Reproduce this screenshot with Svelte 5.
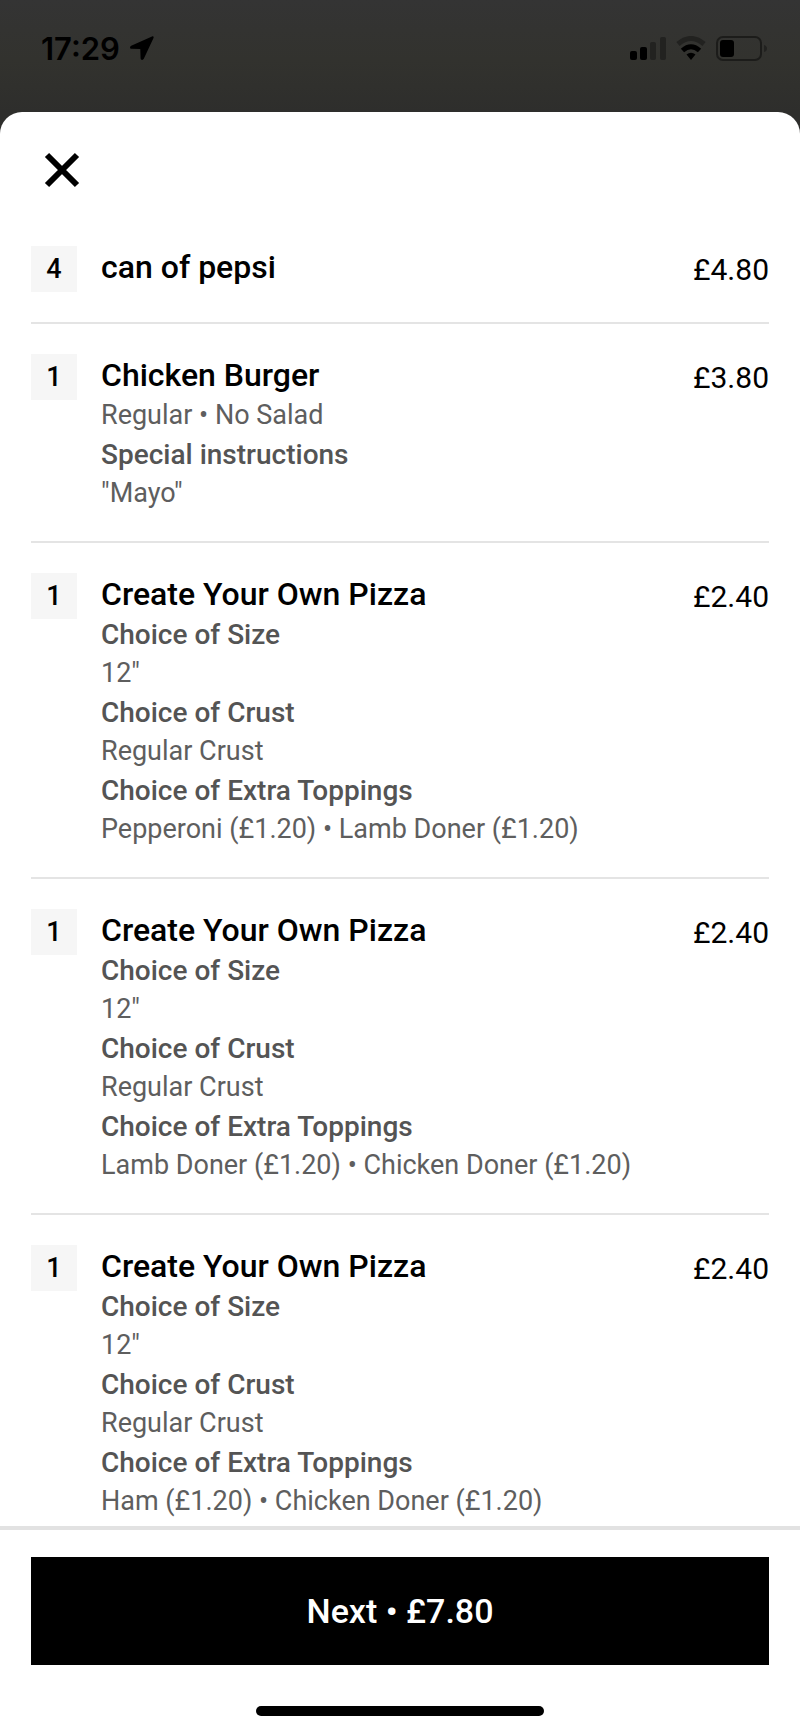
<script lang="ts">
    type Line = { text: string; strong?: boolean };
    type Item = { qty: number; name: string; price: string; lines: Line[] };

    function pizza(toppings: string): Item {
        return {
            qty: 1,
            name: 'Create Your Own Pizza',
            price: '£2.40',
            lines: [
                { text: 'Choice of Size', strong: true },
                { text: '12"' },
                { text: 'Choice of Crust', strong: true },
                { text: 'Regular Crust' },
                { text: 'Choice of Extra Toppings', strong: true },
                { text: toppings },
            ],
        };
    }

    const items: Item[] = [
        { qty: 4, name: 'can of pepsi', price: '£4.80', lines: [] },
        {
            qty: 1,
            name: 'Chicken Burger',
            price: '£3.80',
            lines: [
                { text: 'Regular • No Salad' },
                { text: 'Special instructions', strong: true },
                { text: '"Mayo"' },
            ],
        },
        pizza('Pepperoni (£1.20) • Lamb Doner (£1.20)'),
        pizza('Lamb Doner (£1.20) • Chicken Doner (£1.20)'),
        pizza('Ham (£1.20) • Chicken Doner (£1.20)'),
    ];

    let open = $state(true);
</script>

<div class="screen">
    <div class="status-bar">
        <div class="clock">
            <span>17:29</span>
            <svg width="24" height="24" viewBox="0 0 24 24" aria-hidden="true">
                <path d="M22 .5 1.200 9.800C-.5 10.700-.3 12.800 1.600 12.800L10.300 13 10.600 22.300C10.700 24.300 13 24.500 13.800 22.800L23.500 2C24 .7 23.200 0 22 .5Z" />
            </svg>
        </div>
        <div class="indicators">
            <svg width="36" height="23" viewBox="0 0 36 23" aria-hidden="true">
                <rect x="0" y="14" width="7" height="9" rx="2" />
                <rect x="10" y="10" width="7" height="13" rx="2" />
                <rect class="dim" x="20" y="5" width="6" height="18" rx="2" />
                <rect class="dim" x="30" y="0" width="6" height="23" rx="2" />
            </svg>
            <svg width="30" height="24" viewBox="0 0 30 24" aria-hidden="true">
                <path class="arc dim-arc" d="M2 8Q15-3 28 8" />
                <path class="arc" d="M6.500 14.500Q15 7 23.500 14.500" />
                <path d="M15 24 10.500 18.500Q15 15 19.500 18.500Z" />
            </svg>
            <svg width="51" height="25" viewBox="0 0 51 25" aria-hidden="true">
                <rect class="shell" x="1" y="1" width="44" height="23" rx="6" />
                <rect x="4" y="4" width="14" height="17" rx="3" />
                <path class="dim" d="M48 9Q51 10 51 12.500T48 16Z" />
            </svg>
        </div>
    </div>

    {#if open}
        <div class="sheet">
            <header>
                <button class="close" aria-label="Close" onclick={() => (open = false)}>
                    <svg width="36" height="36" viewBox="0 0 36 36" aria-hidden="true">
                        <path d="M3 3 33 33M33 3 3 33" />
                    </svg>
                </button>
            </header>

            <ul class="items">
                {#each items as item}
                    <li class="item">
                        <span class="qty">{item.qty}</span>
                        <div class="details">
                            <h2>{item.name}</h2>
                            {#each item.lines as line}
                                <p class:strong={line.strong}>{line.text}</p>
                            {/each}
                        </div>
                        <span class="price">{item.price}</span>
                    </li>
                {/each}
            </ul>

            <footer>
                <button class="next">Next • £7.80</button>
                <div class="home-indicator"></div>
            </footer>
        </div>
    {/if}
</div>

<style>
    :global(body) {
        margin: 0;
        background: #323230;
    }

    .screen {
        display: flex;
        flex-direction: column;
        height: 100vh;
        background: linear-gradient(#343434 0, #32322e 60px, #2e2e2c 112px);
        font-family: Roboto, 'Noto Sans', sans-serif;
        color: #000;
    }

    .status-bar {
        flex: none;
        display: flex;
        justify-content: space-between;
        align-items: center;
        height: 96px;
        padding: 0 33px 16px 41px;
    }

    .clock,
    .indicators {
        display: flex;
        align-items: center;
        gap: 10px;
    }

    .clock {
        font-family: Inter, sans-serif;
        font-size: 31px;
        font-weight: 600;
    }

    .dim {
        fill: #222220;
    }

    .arc {
        fill: none;
        stroke: #000;
        stroke-width: 5;
    }

    .dim-arc {
        stroke: #222220;
    }

    .shell {
        fill: none;
        stroke: #1c1c1a;
        stroke-width: 2;
    }

    .sheet {
        flex: 1;
        min-height: 0;
        display: flex;
        flex-direction: column;
        background: #fff;
        border-radius: 22px 22px 0 0;
    }

    header {
        flex: none;
        padding: 32px 36px 50px;
    }

    .close {
        display: flex;
        padding: 8px;
        border: none;
        background: none;
        cursor: pointer;
    }

    .close path {
        fill: none;
        stroke: #000;
        stroke-width: 6;
    }

    .items {
        flex: 1;
        min-height: 0;
        margin: 0;
        padding: 0 31px;
        overflow-y: auto;
        scrollbar-width: none;
        list-style: none;
    }

    .item {
        display: flex;
        align-items: flex-start;
        padding: 30px 0 28px;
        border-bottom: 2px solid #e4e4e4;
    }

    .item:first-child {
        padding: 0 0 28px;
    }

    .qty {
        flex: none;
        width: 46px;
        margin-right: 24px;
        background: #f6f6f6;
        font-size: 27px;
        font-weight: 500;
        line-height: 46px;
        text-align: center;
    }

    .details {
        flex: 1;
    }

    h2 {
        margin: 0;
        font-size: 32px;
        font-weight: 500;
        line-height: 42px;
    }

    p {
        margin: 0;
        color: #5e5e5e;
        font-size: 27px;
        line-height: 39px;
    }

    .strong {
        color: #545454;
        font-size: 28px;
        font-weight: 500;
    }

    .price {
        font-size: 30px;
        line-height: 48px;
    }

    footer {
        flex: none;
        display: flex;
        flex-direction: column;
        align-items: center;
        padding: 27px 31px 15px;
        border-top: 4px solid #e2e2e2;
    }

    .next {
        width: 100%;
        height: 108px;
        border: none;
        background: #000;
        color: #fff;
        font-family: inherit;
        font-size: 34px;
        font-weight: 500;
        cursor: pointer;
    }

    .home-indicator {
        width: 39%;
        height: 10px;
        margin-top: 41px;
        border-radius: 5px;
        background: #000;
    }
</style>
